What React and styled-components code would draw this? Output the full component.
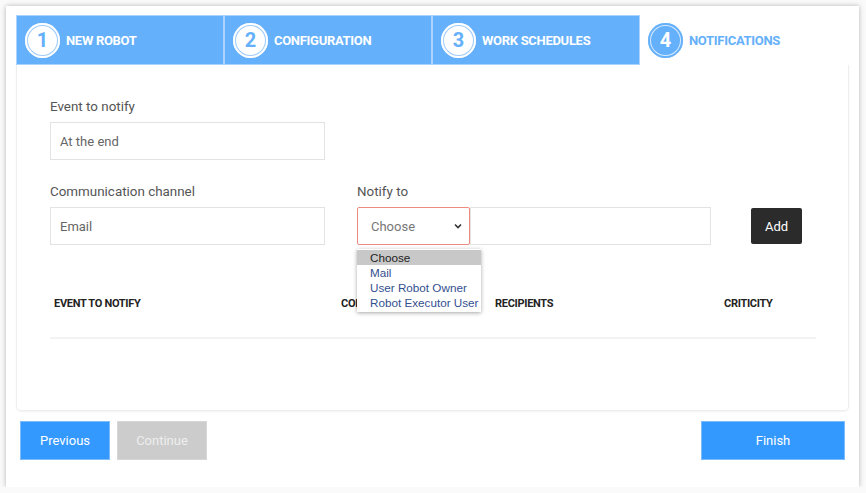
import React from "react";
import styled, { createGlobalStyle } from "styled-components";

const Global = createGlobalStyle`
  html, body { margin: 0; padding: 0; background: #fafafa; }
  body { font-family: Roboto, "Liberation Sans", sans-serif; }
  * { box-sizing: border-box; }
`;

const Window = styled.div`
  margin: 6px 0 0 6px;
  width: 853px;
  height: 481px;
  background: #fff;
  box-shadow: 0 0 5px rgba(0, 0, 0, 0.28);
  padding: 9px 10px 0 10px;
  display: flex;
  flex-direction: column;
`;

const Stepper = styled.div`
  display: grid;
  grid-template-columns: repeat(4, 208px);
  height: 50px;
`;

const Step = styled.div`
  display: flex;
  align-items: center;
  gap: 6px;
  padding-left: 8px;
  background: ${(p) => (p.$active ? "#fff" : "#64b0fb")};
  border: ${(p) => (p.$active ? "none" : "1px solid #a9d2fc")};
  color: ${(p) => (p.$active ? "#64b0fb" : "#fff")};
  font-size: 13px;
  font-weight: 700;
  letter-spacing: -0.3px;
`;

const Circle = styled.div`
  width: 35px;
  height: 35px;
  border-radius: 50%;
  display: flex;
  align-items: center;
  justify-content: center;
  font-size: 20px;
  font-weight: 700;
  letter-spacing: 0;
  background: ${(p) => (p.$active ? "#64b0fb" : "#fff")};
  color: ${(p) => (p.$active ? "#fff" : "#64b0fb")};
  box-shadow: ${(p) =>
    p.$active
      ? "inset 0 0 0 2px #64b0fb, inset 0 0 0 3px #d7eafd"
      : "inset 0 0 0 2px #fff, inset 0 0 0 3px #9ccafb"};
`;

const Card = styled.div`
  height: 346px;
  border: 1px solid #eeeeee;
  border-top: none;
  border-radius: 0 0 5px 5px;
  box-shadow: 0 1px 2px rgba(0, 0, 0, 0.05);
  padding: 34px 32px 0 33px;
`;

const Field = styled.div`
  display: flex;
  flex-direction: column;
  gap: 7px;
`;

const Label = styled.label`
  font-size: 13.4px;
  color: #555;
  line-height: 16px;
`;

const Input = styled.div`
  width: ${(p) => p.$w || 275}px;
  height: 38px;
  border: 1px solid #e3e3e3;
  font-size: 13px;
  color: #666;
  display: flex;
  align-items: center;
  padding-left: 9px;
`;

const Row = styled.div`
  display: flex;
  align-items: flex-end;
  margin-top: ${(p) => p.$mt || 0}px;
`;

const NotifyGroup = styled.div`
  margin-left: 32px;
  display: flex;
  flex-direction: column;
  gap: 7px;
  position: relative;
`;

const InputPair = styled.div`
  display: flex;
  align-items: center;
`;

const Select = styled.div`
  width: 113px;
  height: 38px;
  border: 1px solid #ee8b80;
  border-radius: 2px;
  font-size: 13px;
  color: #777;
  display: flex;
  align-items: center;
  justify-content: space-between;
  padding: 0 6px 0 13px;
`;

const AddButton = styled.button`
  margin-left: 40px;
  width: 51px;
  height: 36px;
  background: #2b2b2b;
  color: #fff;
  border: none;
  border-radius: 2px;
  font-family: Roboto, sans-serif;
  font-size: 13px;
  margin-bottom: 1px;
`;

const Dropdown = styled.div`
  position: absolute;
  left: 0;
  top: calc(100% + 4px);
  width: 124px;
  background: #fff;
  box-shadow: 0 1px 4px rgba(0, 0, 0, 0.35);
  padding: 1px 0 2px;
  z-index: 5;
  font-family: "Liberation Sans", Arial, sans-serif;
  font-size: 11.7px;
`;

const Option = styled.div`
  height: 15px;
  line-height: 15px;
  padding-left: 13px;
  white-space: nowrap;
  background: ${(p) => (p.$sel ? "#c8c8c8" : "transparent")};
  color: ${(p) => (p.$sel ? "#222" : "#33508f")};
`;

const Table = styled.div`
  margin-top: 53px;
  width: 766px;
`;

const HeaderRow = styled.div`
  display: grid;
  grid-template-columns: 287px 154px 229px 96px;
  padding-bottom: 27px;
  border-bottom: 2px solid #f3f3f3;
`;

const Th = styled.div`
  font-size: 11px;
  font-weight: 700;
  color: #222;
  padding-left: 4px;
  letter-spacing: -0.3px;
  line-height: 12px;
  white-space: nowrap;
`;

const Footer = styled.div`
  display: flex;
  align-items: center;
  gap: 7px;
  padding: 10px 4px 0 4px;
`;

const NavButton = styled.button`
  width: ${(p) => p.$w || 90}px;
  height: 39px;
  border: 1px solid ${(p) => (p.$disabled ? "#d6d6d6" : "#7dbcfb")};
  background: ${(p) => (p.$disabled ? "#cccccc" : "#3399ff")};
  color: ${(p) => (p.$disabled ? "#eeeeee" : "#fff")};
  font-family: Roboto, sans-serif;
  font-size: 13px;
  margin-left: ${(p) => (p.$push ? "auto" : "0")};
`;

const steps = ["NEW ROBOT", "CONFIGURATION", "WORK SCHEDULES", "NOTIFICATIONS"];

export default function App() {
  return (
    <>
      <Global />
      <Window>
        <Stepper>
          {steps.map((s, i) => (
            <Step key={s} $active={i === 3}>
              <Circle $active={i === 3}>{i + 1}</Circle>
              {s}
            </Step>
          ))}
        </Stepper>
        <Card>
          <Field>
            <Label>Event to notify</Label>
            <Input>At the end</Input>
          </Field>
          <Row $mt={24}>
            <Field>
              <Label>Communication channel</Label>
              <Input>Email</Input>
            </Field>
            <NotifyGroup>
              <Label>Notify to</Label>
              <InputPair>
                <Select>
                  Choose
                  <svg width="10" height="10" viewBox="0 0 10 10">
                    <path d="M2 3.5 L5 6.5 L8 3.5" fill="none" stroke="#333" strokeWidth="1.6" />
                  </svg>
                </Select>
                <Input $w={241} />
              </InputPair>
              <Dropdown>
                <Option $sel>Choose</Option>
                <Option>Mail</Option>
                <Option>User Robot Owner</Option>
                <Option>Robot Executor User</Option>
              </Dropdown>
            </NotifyGroup>
            <AddButton>Add</AddButton>
          </Row>
          <Table>
            <HeaderRow>
              <Th>EVENT TO NOTIFY</Th>
              <Th>COMMUNICATION CHANNEL</Th>
              <Th>RECIPIENTS</Th>
              <Th>CRITICITY</Th>
            </HeaderRow>
          </Table>
        </Card>
        <Footer>
          <NavButton>Previous</NavButton>
          <NavButton $disabled>Continue</NavButton>
          <NavButton $push $w={144}>Finish</NavButton>
        </Footer>
      </Window>
    </>
  );
}
